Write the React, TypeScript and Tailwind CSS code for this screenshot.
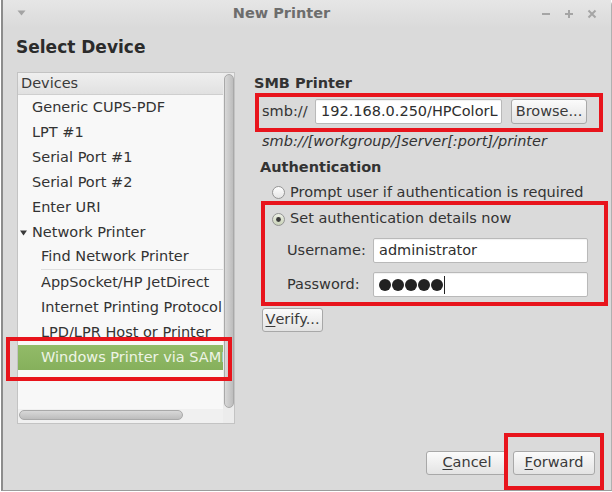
import type { ReactNode } from "react";
import clsx from "clsx";

const FONT = "font-['DejaVu_Sans','Liberation_Sans',sans-serif]";

interface DeviceRow {
  label: string;
  indent: 0 | 1;
  expander?: boolean;
  separator?: boolean;
  selected?: boolean;
}

const devices: DeviceRow[] = [
  { label: "Generic CUPS-PDF", indent: 0 },
  { label: "LPT #1", indent: 0 },
  { label: "Serial Port #1", indent: 0 },
  { label: "Serial Port #2", indent: 0 },
  { label: "Enter URI", indent: 0 },
  { label: "Network Printer", indent: 0, expander: true },
  { label: "Find Network Printer", indent: 1, separator: true },
  { label: "AppSocket/HP JetDirect", indent: 1 },
  { label: "Internet Printing Protocol (ipp)", indent: 1 },
  { label: "LPD/LPR Host or Printer", indent: 1 },
  { label: "Windows Printer via SAMBA", indent: 1, selected: true },
];

function Radio({ checked }: { checked?: boolean }) {
  const id = checked ? "radio-on" : "radio-off";
  return (
    <svg width="13" height="13" viewBox="0 0 13 13" className="shrink-0">
      <defs>
        <linearGradient id={id} x1="0" y1="0" x2="0" y2="1">
          <stop offset="0" stopColor={checked ? "#eef1e6" : "#ffffff"} />
          <stop offset="1" stopColor={checked ? "#c7d0b6" : "#e4e4e4"} />
        </linearGradient>
      </defs>
      <circle cx="6.5" cy="6.5" r="6" fill={`url(#${id})`} stroke="#939393" />
      {checked && <circle cx="6.5" cy="6.5" r="2.4" fill="#3a3a3a" />}
    </svg>
  );
}

function Button({ children, className }: { children: ReactNode; className?: string }) {
  return (
    <div
      className={clsx(
        "flex h-[24px] items-center justify-center rounded-[3px] border border-[#a8a8a8] bg-gradient-to-b from-[#fbfbfb] to-[#e3e3e3] text-[14.5px] text-[#3a3a3a]",
        className
      )}
    >
      {children}
    </div>
  );
}

function Entry({ children, className }: { children?: ReactNode; className?: string }) {
  return (
    <div
      className={clsx(
        "flex h-[25px] items-center overflow-hidden rounded-[2px] border border-[#b9b9b9] bg-white pl-[5px] text-[14.5px] whitespace-nowrap text-[#2e2e2e] shadow-[inset_0_1px_1px_rgba(0,0,0,0.06)]",
        className
      )}
    >
      {children}
    </div>
  );
}

function RedBox({ className, children }: { className?: string; children?: ReactNode }) {
  return <div className={clsx("border-4 border-[#e8141c]", className)}>{children}</div>;
}

function TitleBar() {
  return (
    <div className="flex h-[28px] shrink-0 items-center bg-gradient-to-b from-[#e6e6e6] to-[#dadada] px-[14px]">
      <svg width="9" height="6" viewBox="0 0 9 6" className="mt-[-2px]">
        <path d="M0.5 0.5 H8.5 L4.5 5.5 Z" fill="#a3a3a3" />
      </svg>
      <div className="flex-1 pr-[4px] text-center text-[14.5px] font-bold text-[#6d6d6d]">New Printer</div>
      <div className="flex items-center gap-[13px] text-[#a5a5a5]">
        <svg width="10" height="10" viewBox="0 0 10 10">
          <path d="M1 5 H9" stroke="currentColor" strokeWidth="2" />
        </svg>
        <svg width="10" height="10" viewBox="0 0 10 10">
          <path d="M1 5 H9 M5 1 V9" stroke="currentColor" strokeWidth="2" />
        </svg>
        <svg width="10" height="10" viewBox="0 0 10 10">
          <path d="M1.5 1.5 L8.5 8.5 M8.5 1.5 L1.5 8.5" stroke="currentColor" strokeWidth="2" />
        </svg>
      </div>
    </div>
  );
}

function DeviceList() {
  return (
    <div className="relative ml-[14px] flex h-[352px] w-[218px] border border-[#c3c3c3] bg-[#e4e4e4]">
      <div className="flex w-[205px] flex-col">
        <div className="flex h-[22px] shrink-0 items-center border-b border-[#cfcfcf] bg-gradient-to-b from-[#efefef] to-[#e1e1e1] pl-[3px] text-[14.5px] text-[#3a3a3a]">
          Devices
        </div>
        <div className="flex-1 overflow-hidden bg-[#f8f8f8]">
          {devices.map((d) => (
            <div
              key={d.label}
              className={clsx(
                "flex h-[25px] items-center whitespace-nowrap text-[14.5px]",
                d.selected
                  ? "bg-gradient-to-b from-[#92bb68] to-[#86b05c] text-[#eef4e6]"
                  : "text-[#333333]"
              )}
            >
              {d.indent === 0 ? (
                <div className="flex w-[14px] shrink-0 justify-start pl-[2px]">
                  {d.expander && (
                    <svg width="7" height="6" viewBox="0 0 7 6">
                      <path d="M0 0.5 H7 L3.5 5.5 Z" fill="#3a3a3a" />
                    </svg>
                  )}
                </div>
              ) : (
                <div className="w-[23px] shrink-0" />
              )}
              <div
                className={clsx(
                  "flex h-full flex-1 items-center overflow-hidden",
                  d.separator && "border-b border-[#dfdfdf]"
                )}
              >
                {d.label}
              </div>
            </div>
          ))}
        </div>
        <div className="flex h-[14px] shrink-0 items-start bg-[#f0f0f0] pt-[1px] pl-[1px]">
          <div className="h-[10px] w-[164px] rounded-full border border-[#a9a9a9] bg-gradient-to-b from-[#d8d8d8] to-[#bdbdbd]" />
        </div>
      </div>
      <div className="flex w-[12px] flex-col bg-[#ececec] pt-[1px] pb-[15px] pl-[1px]">
        <div className="w-[10px] flex-1 rounded-full border border-[#a9a9a9] bg-gradient-to-r from-[#d8d8d8] to-[#bdbdbd]" />
      </div>
      <RedBox className="pointer-events-none absolute top-[264px] left-[-12px] h-[44px] w-[226px]" />
    </div>
  );
}

function SettingsPane() {
  return (
    <div className="ml-[19px] flex flex-1 flex-col text-[14.5px] text-[#333333]">
      <div className="mt-px h-[20px] leading-[20px] font-bold">SMB Printer</div>
      <RedBox className="ml-px flex w-[348px] items-center pt-[2px] pb-[4px] pl-[3px]">
        <span className="w-[53px] shrink-0">smb://</span>
        <Entry className="w-[187px]">
          <span className="block w-[177px] overflow-hidden">192.168.0.250/HPColorL</span>
        </Entry>
        <Button className="ml-[9px] h-[25px] w-[76px]">Browse...</Button>
      </RedBox>
      <div className="-mt-px ml-[8px] h-[20px] leading-[20px] italic">
        smb://[workgroup/]server[:port]/printer
      </div>
      <div className="mt-[6px] ml-[6px] h-[20px] leading-[20px] font-bold">Authentication</div>
      <div className="mt-[6px] ml-[18px] flex h-[18px] items-center gap-[5px] leading-[18px]">
        <Radio />
        <span>Prompt user if authentication is required</span>
      </div>
      <RedBox className="ml-[7px] flex w-[347px] flex-col pt-[4px] pb-[5px]">
        <div className="flex h-[20px] items-center gap-[5px] pl-[7px]">
          <Radio checked />
          <span>Set authentication details now</span>
        </div>
        <div className="mt-[9px] flex items-center pl-[22px]">
          <span className="w-[86px] shrink-0">Username:</span>
          <Entry className="w-[215px] pl-[4px]">administrator</Entry>
        </div>
        <div className="mt-[9px] flex items-center pl-[22px]">
          <span className="w-[86px] shrink-0">Password:</span>
          <Entry className="w-[215px] border-[#b4c19c] pl-[4px]">
            {[0, 1, 2, 3, 4].map((i) => (
              <span key={i} className="mr-[1px] h-[12px] w-[12px] rounded-full bg-[#222222]" />
            ))}
            <span className="h-[18px] w-px bg-[#222222]" />
          </Entry>
        </div>
      </RedBox>
      <Button className="mt-[2px] ml-[8px] w-[61px]">
        <span className="underline decoration-1 underline-offset-2">V</span>erify...
      </Button>
    </div>
  );
}

export default function App() {
  return (
    <div className={clsx("h-[492px] w-[612px] overflow-hidden bg-white pl-px", FONT)}>
      <div className="flex h-[491px] flex-col rounded-tr-[5px] border-r border-b border-l-2 border-[#8c8c8c] border-r-[#b0b0b0] border-b-[#9c9c9c] bg-[#dadada]">
        <TitleBar />
        <div className="mt-[8px] ml-[13px] h-[22px] text-[17px] leading-[22px] font-bold text-[#2b2b2b]">
          Select Device
        </div>
        <div className="mt-[14px] flex">
          <DeviceList />
          <SettingsPane />
        </div>
        <div className="mt-[27px] flex justify-end gap-[5px] pr-[16px]">
          <Button className="w-[82px]">
            <span className="underline decoration-1 underline-offset-2">C</span>ancel
          </Button>
          <div className="relative">
            <Button className="w-[82px]">
              <span className="underline decoration-1 underline-offset-2">F</span>orward
            </Button>
            <RedBox className="pointer-events-none absolute -top-[18px] -right-[9px] -bottom-[15px] -left-[9px]" />
          </div>
        </div>
      </div>
    </div>
  );
}
